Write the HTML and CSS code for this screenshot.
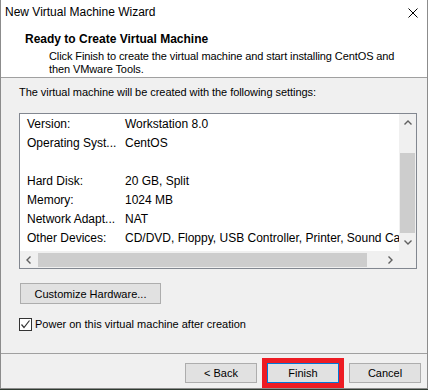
FILE: index.html
```html
<!DOCTYPE html>
<html>
<head>
<meta charset="UTF-8">
<link rel="stylesheet" href="styles.css">
</head>
<body>
<div class="win">
	<div class="titlebar">
		<span class="title">New Virtual Machine Wizard</span>
		<svg class="close" width="10" height="10" viewBox="0 0 10 10"><path d="M0.5 0.5 L9.5 9.5 M9.5 0.5 L0.5 9.5" stroke="#000" stroke-width="1" fill="none"/></svg>
	</div>
	<div class="head">
		<div class="head-title">Ready to Create Virtual Machine</div>
		<div class="head-desc">Click Finish to create the virtual machine and start installing CentOS and<br>then VMware Tools.</div>
	</div>
	<div class="content">
		<div class="intro">The virtual machine will be created with the following settings:</div>
		<div class="listbox">
			<div class="rows">
				<div class="row"><span class="k">Version:</span><span class="v">Workstation 8.0</span></div>
				<div class="row"><span class="k">Operating Syst...</span><span class="v">CentOS</span></div>
				<div class="row"></div>
				<div class="row"><span class="k">Hard Disk:</span><span class="v">20 GB, Split</span></div>
				<div class="row"><span class="k">Memory:</span><span class="v">1024 MB</span></div>
				<div class="row"><span class="k">Network Adapt...</span><span class="v">NAT</span></div>
				<div class="row"><span class="k">Other Devices:</span><span class="v">CD/DVD, Floppy, USB Controller, Printer, Sound Card, Display</span></div>
			</div>
			<div class="vscroll">
				<div class="sb-btn"><svg width="8" height="5" viewBox="0 0 8 5"><path d="M0.5 4.5 L4 1 L7.5 4.5" stroke="#606060" stroke-width="1.4" fill="none"/></svg></div>
				<div class="vtrack"><div class="vthumb"></div></div>
				<div class="sb-btn"><svg width="8" height="5" viewBox="0 0 8 5"><path d="M0.5 0.5 L4 4 L7.5 0.5" stroke="#606060" stroke-width="1.4" fill="none"/></svg></div>
			</div>
			<div class="hscroll">
				<div class="sb-btn"><svg width="5" height="8" viewBox="0 0 5 8"><path d="M4.5 0.5 L1 4 L4.5 7.5" stroke="#606060" stroke-width="1.4" fill="none"/></svg></div>
				<div class="htrack"><div class="hthumb"></div></div>
				<div class="sb-btn"><svg width="5" height="8" viewBox="0 0 5 8"><path d="M0.5 0.5 L4 4 L0.5 7.5" stroke="#606060" stroke-width="1.4" fill="none"/></svg></div>
			</div>
			<div class="corner"></div>
		</div>
		<div class="btn btn-hw">Customize Hardware...</div>
		<div class="check">
			<span class="box"><svg width="11" height="11" viewBox="0 0 11 11"><path d="M1.5 5.5 L4 8.5 L9.5 1.5" stroke="#333" stroke-width="1.2" fill="none"/></svg></span>
			<span>Power on this virtual machine after creation</span>
		</div>
	</div>
	<div class="footer">
		<div class="btn">&lt; Back</div>
		<div class="btn btn-default">Finish</div>
		<div class="btn">Cancel</div>
	</div>
</div>
</body>
</html>
```
FILE: styles.css
```css
body {
	margin: 0;
	background-color: #2f3a30;
	font-family: "Liberation Sans", Arial, sans-serif;
	font-size: 11px;
	color: #000;
}
.win {
	width: 428px;
	box-sizing: border-box;
	background-color: #f0f0f0;
	border: 1px solid #8c8c8c;
	border-top: none;
}
.titlebar {
	height: 24px;
	background-color: #fff;
	display: flex;
	align-items: center;
	justify-content: space-between;
	padding: 0 9px 0 4px;
}
.title {
	font-size: 12px;
	line-height: 24px;
}
.close {
	margin-top: 1px;
	display: block;
}
.head {
	background-color: #fff;
	padding: 8px 0 1px 0;
	border-bottom: 1px solid #a0a0a0;
}
.head-title {
	font-size: 12px;
	font-weight: bold;
	line-height: 15px;
	padding-left: 24px;
}
.head-desc {
	margin-top: 3px;
	line-height: 13px;
	padding-left: 48px;
	letter-spacing: -0.1px;
}
.content {
	padding-left: 18px;
}
.intro {
	margin-top: 8px;
	line-height: 13px;
	letter-spacing: -0.05px;
}
.listbox {
	margin-top: 14px;
	width: 398px;
	height: 156px;
	box-sizing: border-box;
	border: 1px solid #828790;
	display: grid;
	grid-template-columns: 379px 17px;
	grid-template-rows: 137px 17px;
}
.rows {
	background-color: #fff;
	padding-top: 1px;
	overflow: hidden;
	font-size: 12px;
}
.row {
	height: 19px;
	line-height: 19px;
	white-space: nowrap;
	overflow: hidden;
}
.k {
	display: inline-block;
	box-sizing: border-box;
	width: 105px;
	padding-left: 7px;
}
.vscroll {
	background-color: #f0f0f0;
	display: flex;
	flex-direction: column;
}
.sb-btn {
	width: 17px;
	height: 17px;
	display: flex;
	align-items: center;
	justify-content: center;
	flex: none;
}
.vtrack {
	flex: 1;
}
.vthumb {
	margin: 22px 1px 0 1px;
	height: 80px;
	background-color: #cdcdcd;
}
.hscroll {
	background-color: #f0f0f0;
	display: flex;
}
.htrack {
	flex: 1;
	display: flex;
	align-items: center;
}
.hthumb {
	margin-left: 1px;
	width: 329px;
	height: 14px;
	background-color: #cdcdcd;
}
.corner {
	background-color: #f0f0f0;
}
.btn {
	box-sizing: border-box;
	height: 20px;
	width: 72px;
	border: 1px solid #adadad;
	background-color: #e1e1e1;
	display: flex;
	align-items: center;
	justify-content: center;
}
.btn-hw {
	margin: 14px 0 0 1px;
	width: 141px;
	height: 21px;
}
.check {
	margin-top: 14px;
	display: flex;
	align-items: center;
	gap: 3px;
	line-height: 13px;
}
.box {
	width: 13px;
	height: 13px;
	box-sizing: border-box;
	border: 1px solid #333;
	background-color: #fff;
	display: flex;
	align-items: center;
	justify-content: center;
}
.footer {
	margin-top: 22px;
	border-top: 1px solid #a0a0a0;
	padding: 9px 6px 5px 0;
	display: flex;
	justify-content: flex-end;
	gap: 10px;
}
.btn-default {
	border-color: #0078d7;
	outline: 5px solid #ed1c24;
}
```
